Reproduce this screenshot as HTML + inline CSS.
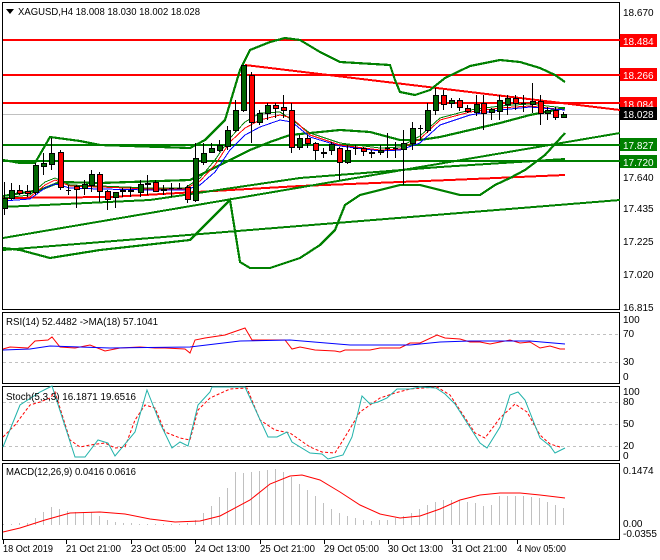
<!DOCTYPE html>
<html><head><meta charset="utf-8"><style>
html,body{margin:0;padding:0;background:#fff;}
svg{display:block;font-family:"Liberation Sans",sans-serif;}
text{font-size:10px;fill:#000;}
</style></head><body>
<svg id="s" width="660" height="560" xmlns="http://www.w3.org/2000/svg">
<rect width="660" height="560" fill="#fff"/>
<rect x="2.5" y="2.5" width="617" height="307" fill="none" stroke="#000"/>
<rect x="2.5" y="312.5" width="617" height="71" fill="none" stroke="#000"/>
<rect x="2.5" y="386.5" width="617" height="74" fill="none" stroke="#000"/>
<rect x="2.5" y="463.5" width="617" height="76" fill="none" stroke="#000"/>
<g id="main" shape-rendering="crispEdges"></g>
<g id="ind"></g>
<polygon points="6,9 14,9 10,14" fill="#000"/>
<text x="18" y="15" textLength="182" lengthAdjust="spacingAndGlyphs">XAGUSD,H4  18.008 18.030 18.002 18.028</text>
<text x="6" y="325" textLength="152" lengthAdjust="spacingAndGlyphs">RSI(14) 52.4482  -&gt;MA(18) 57.1041</text>
<text x="6" y="400" textLength="130" lengthAdjust="spacingAndGlyphs">Stoch(5,3,3) 16.1871 19.6516</text>
<text x="6" y="475" textLength="130" lengthAdjust="spacingAndGlyphs">MACD(12,26,9) 0.0416 0.0616</text>
<g>
<text x="623" y="16">18.670</text>
<text x="623" y="212">17.435</text>
<text x="623" y="181">17.640</text>
<text x="623" y="245">17.225</text>
<text x="623" y="278">17.020</text>
<text x="623" y="311">16.815</text>
<text x="623" y="323">100</text>
<text x="623" y="337">70</text>
<text x="623" y="365">30</text>
<text x="623" y="380">0</text>
<text x="623" y="395">100</text>
<text x="623" y="405">80</text>
<text x="623" y="427">50</text>
<text x="623" y="449">20</text>
<text x="623" y="459">0</text>
<text x="623" y="474">0.1474</text>
<text x="623" y="527">0.00</text>
<text x="623" y="537">-0.0355</text>
</g>
<g>
<rect x="620" y="34" width="37" height="13" fill="#f00"/><text x="623" y="45" style="fill:#fff">18.484</text>
<rect x="620" y="68" width="37" height="13" fill="#f00"/><text x="623" y="79" style="fill:#fff">18.266</text>
<rect x="620" y="97" width="37" height="13" fill="#f00"/><text x="623" y="108" style="fill:#fff">18.084</text>
<rect x="620" y="107" width="37" height="13" fill="#000"/><text x="623" y="118" style="fill:#fff">18.028</text>
<rect x="620" y="138" width="37" height="13" fill="#008000"/><text x="623" y="149" style="fill:#fff">17.827</text>
<rect x="620" y="155" width="37" height="13" fill="#008000"/><text x="623" y="166" style="fill:#fff">17.720</text>
</g>
<g>
<text x="3" y="552" textLength="50" lengthAdjust="spacingAndGlyphs">18 Oct 2019</text>
<text x="66" y="552" textLength="55" lengthAdjust="spacingAndGlyphs">21 Oct 21:00</text>
<text x="131" y="552" textLength="55" lengthAdjust="spacingAndGlyphs">23 Oct 05:00</text>
<text x="195" y="552" textLength="55" lengthAdjust="spacingAndGlyphs">24 Oct 13:00</text>
<text x="260" y="552" textLength="55" lengthAdjust="spacingAndGlyphs">25 Oct 21:00</text>
<text x="324" y="552" textLength="55" lengthAdjust="spacingAndGlyphs">29 Oct 05:00</text>
<text x="388" y="552" textLength="55" lengthAdjust="spacingAndGlyphs">30 Oct 13:00</text>
<text x="452" y="552" textLength="55" lengthAdjust="spacingAndGlyphs">31 Oct 21:00</text>
<text x="517" y="552" textLength="49" lengthAdjust="spacingAndGlyphs">4 Nov 05:00</text>
</g>
</svg>
<script>
var NS="http://www.w3.org/2000/svg";
function el(p,n,a){var e=document.createElementNS(NS,n);for(var k in a)e.setAttribute(k,a[k]);p.appendChild(e);return e;}
var M=document.getElementById('main'),I=document.getElementById('ind');
function pl(p,pts,c,w,extra){var a={points:pts.map(function(q){return q.join(',')}).join(' '),fill:'none',stroke:c,'stroke-width':w};for(var k in extra)a[k]=extra[k];return el(p,'polyline',a);}
el(M,'line',{x1:3,y1:114.5,x2:619,y2:114.5,stroke:'#c0c0c0'});
[[40,'#f00'],[75,'#f00'],[103,'#f00']].forEach(function(l){el(M,'rect',{x:3,y:l[0]-1,width:617,height:2,fill:l[1]});});
[[145],[161]].forEach(function(l){el(M,'rect',{x:3,y:l[0]-1,width:617,height:2,fill:'#008000'});});
pl(M,[[245,65],[620,110]],'#f00',2);
pl(M,[[3,198],[110,197],[300,186],[450,180],[565,175]],'#f00',2);
pl(M,[[3,238],[620,133]],'#008000',2);
pl(M,[[3,250],[620,200]],'#008000',2);
pl(M,[[3,207],[150,200],[300,178],[440,167],[565,159]],'#008000',2);
pl(M,[[3,160],[20,163],[35,163],[50,137],[80,141],[100,145],[190,148],[205,140],[225,120],[240,70],[250,50],[270,42],[285,38],[300,40],[320,52],[340,62],[390,65],[395,80],[400,92],[415,95],[430,90],[445,78],[470,66],[500,60],[520,62],[540,68],[555,75],[565,82]],'#008000',2.2);
pl(M,[[3,248],[20,250],[50,258],[100,250],[190,240],[215,215],[230,200],[240,262],[250,268],[270,268],[300,258],[320,245],[335,230],[345,205],[360,195],[380,190],[400,185],[420,185],[440,190],[460,195],[480,195],[495,185],[510,178],[525,170],[545,155],[565,133]],'#008000',2.2);
pl(M,[[3,196],[40,190],[60,182],[100,183],[190,180],[210,170],[230,160],[250,150],[270,142],[290,135],[320,132],[340,130],[370,132],[400,140],[420,140],[440,137],[470,130],[500,123],[530,115],[565,108]],'#008000',2.2);
pl(M,[[3,198],[30,195],[45,182],[55,178],[70,185],[100,186],[150,188],[185,188],[200,178],[215,160],[230,138],[245,122],[260,113],[280,112],[292,120],[310,133],[340,143],[380,148],[400,147],[420,136],[440,118],[470,110],[500,106],[530,104],[565,108]],'#008000',1);
pl(M,[[3,199],[30,197],[45,185],[55,180],[70,186],[100,187],[150,189],[185,189],[200,181],[215,165],[230,142],[245,128],[260,120],[280,115],[292,118],[310,135],[340,145],[380,150],[400,149],[420,139],[440,120],[470,112],[500,108],[530,106],[565,110]],'#f00',1);
pl(M,[[3,201],[30,199],[45,188],[55,184],[70,188],[100,189],[150,190],[185,190],[200,185],[215,172],[230,150],[245,135],[260,127],[280,120],[292,122],[310,137],[340,146],[380,151],[400,150],[420,143],[440,125],[470,115],[500,110],[530,107],[565,110]],'#00f',1);
var C=[[4,208,198,182,215],[11,198,190,183,200],[19,190,193,185,195],[27,191,193,185,197],[35,192,165,163,195],[43,166,163,153,175],[51,164,153,138,170],[60,152,187,150,190],[68,190,190,185,195],[76,186,189,185,208],[84,188,184,180,195],[91,185,174,170,192],[99,174,191,172,202],[107,191,199,190,210],[115,197,192,192,208],[122,190,191,188,197],[130,191,190,187,197],[140,192,184,180,197],[147,184,183,175,195],[155,182,191,180,192],[163,190,189,185,195],[171,188,188,183,197],[179,188,188,183,189],[187,187,199,185,203],[195,200,158,143,202],
[203,162,153,143,165],[211,152,148,143,153],[219,150,145,140,152],[227,146,130,126,150],[235,130,110,100,132],[243,110,65,65,112],[251,75,122,72,143],[259,122,113,110,125],[267,113,105,103,120],[275,105,108,103,118],[283,107,110,95,118],[291,110,147,103,153],[299,147,138,135,150],[307,138,143,135,148],[315,143,150,142,160],[323,152,153,148,158],[331,150,144,142,155],[339,148,162,147,180],[347,162,150,145,164],[355,148,148,145,155],[363,148,151,147,156],[371,152,153,150,158],
[380,152,150,145,155],[387,148,148,133,158],[395,148,148,142,158],[403,149,143,130,185],[412,143,128,122,150],[420,128,128,125,140],[427,130,110,103,133],[435,110,95,88,115],[443,95,104,90,110],[451,103,100,98,108],[459,100,107,98,111],[467,108,111,105,113],[476,112,104,95,116],[483,103,113,95,130],[491,112,109,108,120],[499,111,100,95,120],[507,104,98,95,115],[515,98,103,95,110],[523,103,103,95,112],[532,104,101,83,113],[540,101,113,95,125],[547,113,110,107,120],[555,110,117,107,120],[563,117,114,112,117]];
C.forEach(function(c){var x=c[0];el(M,'line',{x1:x+.5,y1:c[3],x2:x+.5,y2:c[4],stroke:'#000'});
var t=Math.min(c[1],c[2]),b=Math.max(c[1],c[2]);
if(b-t<1){el(M,'line',{x1:x-2,y1:t+.5,x2:x+3,y2:t+.5,stroke:'#000'});}
else el(M,'rect',{x:x-2+.5,y:t+.5,width:5,height:b-t,fill:c[2]<c[1]?'#006400':'#f00',stroke:'#000'});});
[334,362,402,424,446].forEach(function(y){el(I,'line',{x1:3,y1:y+.5,x2:619,y2:y+.5,stroke:'#c0c0c0','stroke-dasharray':'3,3'});});
pl(I,[[3,349],[10,347],[28,348],[35,341],[48,340],[52,337],[60,347],[75,348],[90,345],[105,351],[120,348],[140,347],[155,348],[165,348],[185,349],[190,353],[195,340],[205,338],[225,335],[245,328],[252,340],[285,340],[292,349],[300,347],[315,350],[335,351],[340,352],[345,350],[370,350],[380,348],[400,348],[410,343],[420,343],[437,335],[445,338],[460,339],[470,342],[480,342],[490,344],[500,342],[510,340],[520,343],[530,342],[540,348],[550,346],[560,349],[565,349]],'#f00',1);
pl(I,[[3,350],[30,349],[50,346],[110,348],[190,347],[240,341],[290,340],[350,345],[410,345],[440,342],[470,341],[530,341],[565,344]],'#00f',1);
pl(I,[[3,437],[15,425],[30,405],[40,402],[50,398],[55,392],[70,440],[80,447],[90,445],[105,443],[115,448],[125,447],[135,420],[145,405],[155,408],[165,432],[180,438],[190,440],[198,410],[210,398],[230,389],[247,388],[260,420],[275,430],[290,433],[310,447],[322,452],[335,453],[345,437],[360,412],[380,398],[395,393],[410,389],[437,387],[450,395],[475,433],[485,438],[500,418],[515,404],[527,412],[540,435],[550,444],[560,447]],'#f00',1,{'stroke-dasharray':'3,2'});
pl(I,[[3,447],[20,405],[40,392],[52,386],[75,457],[85,457],[98,440],[108,443],[115,456],[135,432],[147,390],[160,423],[172,448],[180,442],[188,446],[198,405],[210,392],[212,387],[245,387],[268,437],[277,437],[287,432],[292,442],[310,453],[322,454],[328,459],[343,455],[352,437],[362,396],[370,404],[378,402],[387,398],[397,389],[410,389],[420,387],[436,388],[445,394],[455,404],[480,443],[487,448],[500,427],[510,395],[518,392],[525,400],[540,438],[550,446],[555,453],[565,448]],'#20b2aa',1);
var H=[524,524,523,523,518,512,507,509,511,512,513,512,516,520,522,523,523,524,524,524,524,524,524,523,520,513,506,497,488,472,473,472,471,470,469,472,477,484,490,496,503,509,513,516,518,520,521,520,520,518,516,513,509,505,502,500,500,500,502,503,506,505,496,496,496,496,497,498,502,505,508];
H.forEach(function(y,i){var x=3+i*8;el(I,'line',{x1:x+.5,y1:y,x2:x+.5,y2:525,stroke:'#c0c0c0'});});
pl(I,[[3,532],[20,528],[45,520],[70,513],[100,512],[125,514],[150,519],[175,522],[200,521],[220,516],[250,500],[270,484],[290,476],[302,475],[320,480],[340,492],[360,505],[380,514],[400,518],[420,516],[440,509],[460,500],[480,495],[500,493],[520,493],[540,495],[565,498]],'#f00',1);
[3,66,131,195,260,324,388,452,517].forEach(function(x){el(I,'line',{x1:x+.5,y1:540,x2:x+.5,y2:544,stroke:'#000'});});
</script>
</body></html>
